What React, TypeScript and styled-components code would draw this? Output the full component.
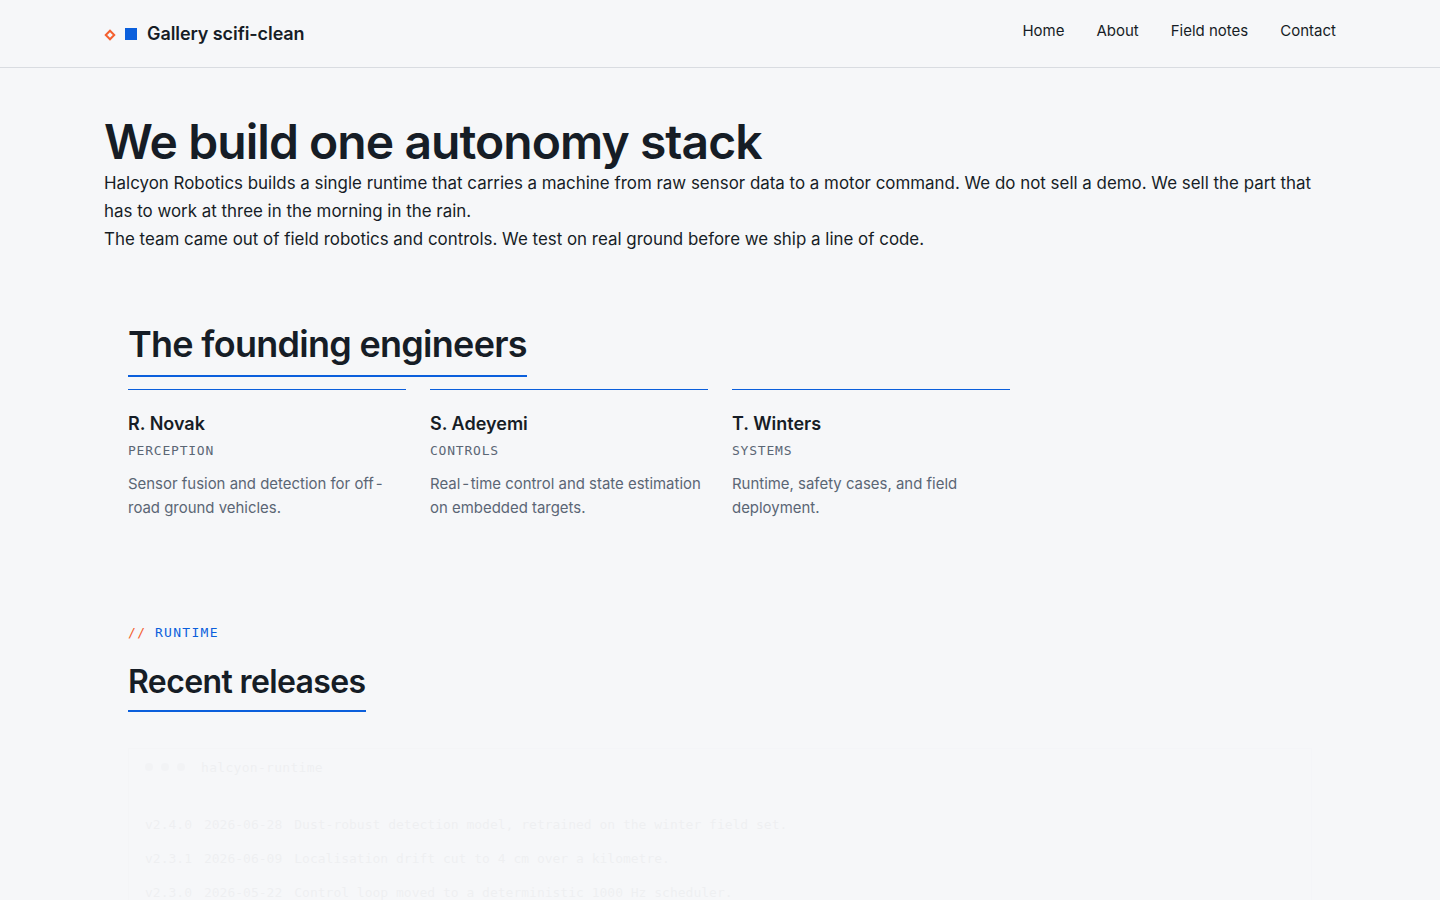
import React from 'react';
import styled, {createGlobalStyle} from 'styled-components';

const Hyphen = styled.span`
    padding: 0 1.5px 0 2px;
`;

const team = [
    {name: 'R. Novak', role: 'Perception', bio: <>Sensor fusion and detection for off<Hyphen>-</Hyphen>road ground vehicles.</>},
    {name: 'S. Adeyemi', role: 'Controls', bio: <>Real<Hyphen>-</Hyphen>time control and state estimation on embedded targets.</>},
    {name: 'T. Winters', role: 'Systems', bio: <>Runtime, safety cases, and field deployment.</>},
];

const releases = [
    {version: 'v2.4.0', date: '2026-06-28', note: 'Dust-robust detection model, retrained on the winter field set.'},
    {version: 'v2.3.1', date: '2026-06-09', note: 'Localisation drift cut to 4 cm over a kilometre.'},
    {version: 'v2.3.0', date: '2026-05-22', note: 'Control loop moved to a deterministic 1000 Hz scheduler.'},
];

const App = () => {
    return (
        <Page>
            <GlobalStyle/>
            <Header>
                <HeaderInner>
                    <Brand>
                        <Diamond/>
                        <Square/>
                        <BrandName>Gallery scifi-clean</BrandName>
                    </Brand>
                    <Nav>
                        <NavLink href="#">Home</NavLink>
                        <NavLink href="#">About</NavLink>
                        <NavLink href="#">Field notes</NavLink>
                        <NavLink href="#">Contact</NavLink>
                    </Nav>
                </HeaderInner>
            </Header>
            <Main>
                <Title>We build one autonomy stack</Title>
                <Lead>
                    Halcyon Robotics builds a single runtime that carries a machine from raw sensor data to a motor
                    command. We do not sell a demo. We sell the part that has to work at three in the morning in the rain.
                </Lead>
                <Lead>The team came out of field robotics and controls. We test on real ground before we ship a line of code.</Lead>
                <TeamSection>
                    <TeamTitle>The founding engineers</TeamTitle>
                    <TeamGrid>
                        {team.map(member => (
                            <Card key={member.name}>
                                <CardName>{member.name}</CardName>
                                <CardRole>{member.role}</CardRole>
                                <CardBio>{member.bio}</CardBio>
                            </Card>
                        ))}
                    </TeamGrid>
                </TeamSection>
                <ReleaseSection>
                    <Eyebrow><Slashes>//</Slashes>Runtime</Eyebrow>
                    <ReleaseTitle>Recent releases</ReleaseTitle>
                    <Terminal>
                        <TerminalBar>
                            <Dots>
                                <Dot/>
                                <Dot/>
                                <Dot/>
                            </Dots>
                            <TerminalName>halcyon-runtime</TerminalName>
                        </TerminalBar>
                        <TerminalBody>
                            {releases.map(release => (
                                <ReleaseRow key={release.version}>
                                    <span>{release.version}</span>
                                    <span>{release.date}</span>
                                    <span>{release.note}</span>
                                </ReleaseRow>
                            ))}
                        </TerminalBody>
                    </Terminal>
                </ReleaseSection>
            </Main>
        </Page>
    );
};

export default App;

const GlobalStyle = createGlobalStyle`
    html, body {
        margin: 0;
        height: 100%;
        overflow: hidden;
        background: #f6f7f9;
    }

    * {
        box-sizing: border-box;
    }
`;

const Page = styled.div`
    height: 900px;
    overflow: hidden;
    background: #f6f7f9;
    color: #161d26;
    font-family: Inter, "Liberation Sans", sans-serif;
`;

const Header = styled.header`
    height: 68px;
    border-bottom: 1px solid #d9dce1;
`;

const HeaderInner = styled.div`
    max-width: 1232px;
    margin: 0 auto;
    display: flex;
    justify-content: space-between;
    align-items: flex-start;
`;

const Brand = styled.div`
    display: flex;
    align-items: center;
    height: 67px;
`;

const Diamond = styled.span`
    width: 8px;
    height: 8px;
    margin: 2px 0 0 2px;
    border: 2px solid #f4602f;
    transform: rotate(45deg);
`;

const Square = styled.span`
    width: 12px;
    height: 12px;
    margin-left: 11px;
    background: #0b5fdc;
`;

const BrandName = styled.span`
    margin-left: 10px;
    font-size: 18px;
    font-weight: 600;
    letter-spacing: -0.08px;
`;

const Nav = styled.nav`
    display: flex;
    gap: 32px;
    padding-top: 20px;
`;

const NavLink = styled.a`
    color: #161d26;
    font-size: 15px;
    line-height: 22px;
    text-decoration: none;
`;

const Main = styled.main`
    max-width: 1232px;
    margin: 0 auto;
    padding-top: 48px;
`;

const Title = styled.h1`
    margin: 0 0 1px;
    font-size: 48px;
    font-weight: 600;
    line-height: 52px;
    letter-spacing: -0.94px;
`;

const Lead = styled.p`
    margin: 0;
    font-size: 16.92px;
    line-height: 28px;
`;

const TeamSection = styled.section`
    padding: 69px 24px 0;
`;

const TeamTitle = styled.h2`
    display: inline-block;
    margin: 0;
    padding-bottom: 9px;
    border-bottom: 2px solid #0b5fdc;
    font-size: 36px;
    font-weight: 600;
    line-height: 44px;
    letter-spacing: -0.72px;
`;

const TeamGrid = styled.div`
    display: grid;
    grid-template-columns: repeat(4, 1fr);
    gap: 24px;
    margin-top: 12px;
`;

const Card = styled.article`
    padding-top: 20px;
    border-top: 1px solid #0b5fdc;
`;

const CardName = styled.h3`
    margin: 0;
    font-size: 18px;
    font-weight: 600;
    line-height: 28px;
`;

const CardRole = styled.div`
    margin-top: 4px;
    color: #5b6675;
    font-family: "DejaVu Sans Mono", monospace;
    font-size: 13px;
    line-height: 18px;
    letter-spacing: 0.78px;
    text-transform: uppercase;
`;

const CardBio = styled.p`
    margin: 12px 0 0;
    color: #5b6675;
    font-size: 14.95px;
    line-height: 24px;
`;

const ReleaseSection = styled.section`
    padding: 103px 24px 0;
`;

const Eyebrow = styled.div`
    color: #0b5fdc;
    font-family: "DejaVu Sans Mono", monospace;
    font-size: 13px;
    line-height: 20px;
    letter-spacing: 1.3px;
    text-transform: uppercase;
`;

const Slashes = styled.span`
    margin-right: 8.7px;
    color: #f4602f;
`;

const ReleaseTitle = styled.h2`
    display: table;
    margin: 19px 0 0;
    padding-bottom: 8px;
    border-bottom: 2px solid #0b5fdc;
    font-size: 32px;
    font-weight: 600;
    line-height: 40px;
    letter-spacing: -0.62px;
`;

const Terminal = styled.div`
    margin-top: 36px;
    opacity: 0.03;
    border: 1px solid #c4cad3;
    color: #161d26;
    font-family: "DejaVu Sans Mono", monospace;
    font-size: 13px;
`;

const TerminalBar = styled.div`
    display: flex;
    align-items: center;
    gap: 16px;
    height: 36px;
    padding: 0 16px;
`;

const TerminalName = styled.span`
    letter-spacing: 0.3px;
`;

const Dots = styled.div`
    display: flex;
    gap: 8px;
`;

const Dot = styled.span`
    width: 8px;
    height: 8px;
    border-radius: 50%;
    background: #8a94a3;
`;

const TerminalBody = styled.div`
    padding: 30px 16px;
    display: grid;
    gap: 14px;
`;

const ReleaseRow = styled.div`
    display: flex;
    gap: 12px;
    line-height: 20px;
    white-space: nowrap;
`;
